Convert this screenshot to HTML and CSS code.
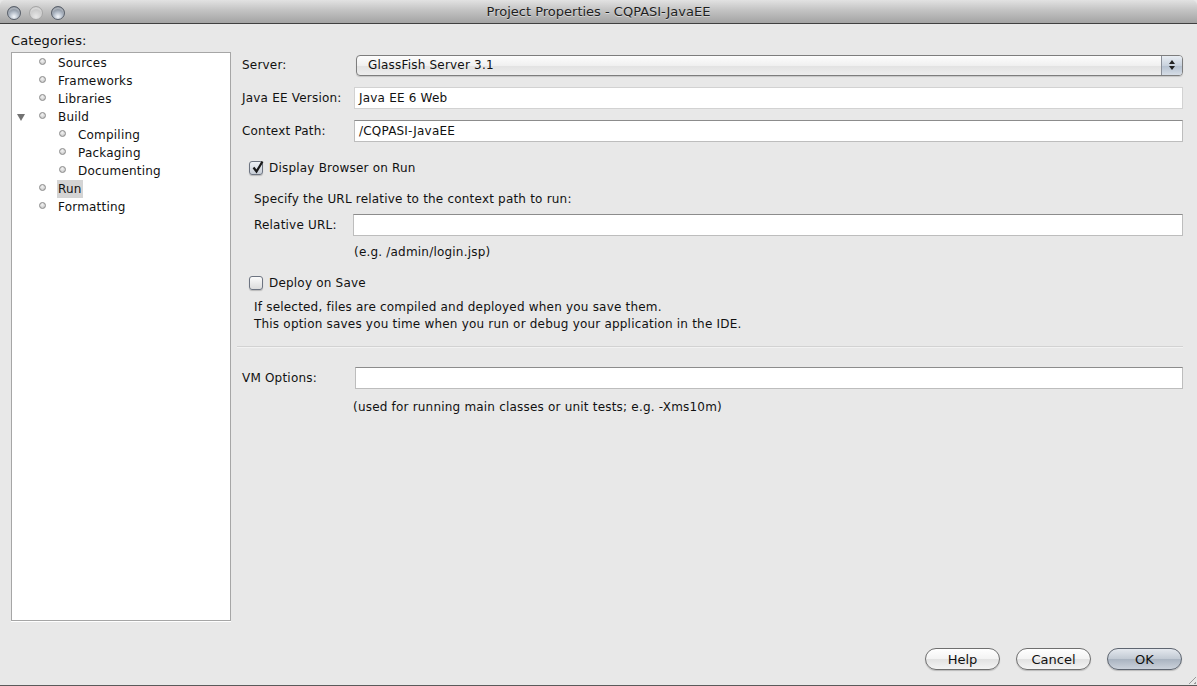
FILE: index.html
```html
<!DOCTYPE html>
<html lang="en">
<head>
  <meta charset="UTF-8">
  <title>Project Properties - CQPASI-JavaEE</title>
  <link rel="stylesheet" href="styles.css">
</head>
<body>

  <div class="window">
    <div class="titlebar">
      <div class="lights">
        <span class="light"></span>
        <span class="light off"></span>
        <span class="light"></span>
      </div>
      <div class="title">Project Properties - CQPASI-JavaEE</div>
    </div>

    <div class="content">
      <!-- Kategoriler -->
      <div class="sidebar">
        <div class="cat-label">Categories:</div>
        <div class="tree">
          <div class="node"><span class="dot"></span><span class="name">Sources</span></div>
          <div class="node"><span class="dot"></span><span class="name">Frameworks</span></div>
          <div class="node"><span class="dot"></span><span class="name">Libraries</span></div>
          <div class="node"><span class="twisty"></span><span class="dot"></span><span class="name">Build</span></div>
          <div class="node child"><span class="dot"></span><span class="name">Compiling</span></div>
          <div class="node child"><span class="dot"></span><span class="name">Packaging</span></div>
          <div class="node child"><span class="dot"></span><span class="name">Documenting</span></div>
          <div class="node"><span class="dot"></span><span class="name selected">Run</span></div>
          <div class="node"><span class="dot"></span><span class="name">Formatting</span></div>
        </div>
      </div>

      <!-- Ayarlar -->
      <div class="main">
        <div class="row first">
          <label class="lbl">Server:</label>
          <div class="combo">
            <span class="combo-text">GlassFish Server 3.1</span>
            <span class="combo-arrows">
              <svg width="8" height="12" viewBox="0 0 8 12"><path d="M4 1 L7 5 L1 5 Z" fill="#222"/><path d="M1 7 L7 7 L4 11 Z" fill="#222"/></svg>
            </span>
          </div>
        </div>
        <div class="row">
          <label class="lbl">Java EE Version:</label>
          <div class="field readonly">Java EE 6 Web</div>
        </div>
        <div class="row">
          <label class="lbl">Context Path:</label>
          <div class="field">/CQPASI-JavaEE</div>
        </div>

        <div class="check-row browser">
          <span class="checkbox checked">
            <svg width="13" height="13" viewBox="0 0 13 13"><path d="M2.5 6.5 L5.5 10.5 L11.5 0.5" stroke="#1a1a1a" stroke-width="2.2" fill="none"/></svg>
          </span>
          <span>Display Browser on Run</span>
        </div>
        <div class="indent note">Specify the URL relative to the context path to run:</div>
        <div class="row indent url">
          <label class="lbl short">Relative URL:</label>
          <div class="field"></div>
        </div>
        <div class="hint">(e.g. /admin/login.jsp)</div>

        <div class="check-row deploy">
          <span class="checkbox"></span>
          <span>Deploy on Save</span>
        </div>
        <div class="indent desc">
          If selected, files are compiled and deployed when you save them.<br>
          This option saves you time when you run or debug your application in the IDE.
        </div>

        <div class="separator"></div>

        <div class="row vm">
          <label class="lbl">VM Options:</label>
          <div class="field vmfield"></div>
        </div>
        <div class="hint vmhint">(used for running main classes or unit tests; e.g. -Xms10m)</div>
      </div>
    </div>

    <div class="footer">
      <button class="btn">Help</button>
      <button class="btn">Cancel</button>
      <button class="btn default">OK</button>
      <span class="grip"></span>
    </div>
  </div>

</body>
</html>
```

FILE: styles.css
```css
html, body {
  margin: 0;
  padding: 0;
  background: #e8e8e8;
  font-family: 'DejaVu Sans', 'Liberation Sans', sans-serif;
  font-size: 12px;
  letter-spacing: 0.2px;
  color: #111;
}

.window {
  width: 1197px;
  height: 686px;
  display: flex;
  flex-direction: column;
  background: #e8e8e8;
  border-bottom: 1px solid #5a5a5a;
  box-sizing: border-box;
  position: relative;
  overflow: hidden;
}

/* Baslik cubugu */
.titlebar {
  height: 23px;
  flex: none;
  display: flex;
  align-items: center;
  justify-content: center;
  position: relative;
  background: linear-gradient(#e2e2e2, #c6c6c6 40%, #a3a3a3);
  border-bottom: 1px solid #404040;
  border-top-right-radius: 5px;
  border-top-left-radius: 5px;
}

.title {
  font-size: 13px;
  letter-spacing: 0;
  color: #1e1e1e;
  text-shadow: 0 1px 0 rgba(255, 255, 255, 0.45);
}

.lights {
  position: absolute;
  left: 7px;
  top: 6px;
  display: flex;
  gap: 8px;
}

.light {
  width: 14px;
  height: 14px;
  border-radius: 50%;
  border: 1px solid #5d636d;
  background: radial-gradient(circle at 50% 80%, #f4f7fb 0%, #b3bcc8 40%, #6d7682 85%),
              #6d7682;
  box-sizing: border-box;
  box-shadow: inset 0 2px 1px rgba(255, 255, 255, 0.35);
}

.light.off {
  border-color: #a6a6a6;
  background: radial-gradient(circle at 50% 80%, #e6e6e6 0%, #cdcdcd 55%, #b4b4b4 100%);
}

/* Icerik */
.content {
  flex: 1;
  display: flex;
  padding: 0 14px 0 11px;
}

.sidebar {
  width: 220px;
  display: flex;
  flex-direction: column;
}

.cat-label {
  font-size: 13px;
  letter-spacing: 0.1px;
  margin-top: 9px;
  line-height: 16px;
  margin-bottom: 3px;
}

.tree {
  flex: 1;
  background: #fff;
  border: 1px solid #a6a6a6;
  box-shadow: 0 1px 0 #fff;
  padding-top: 1px;
}

.node {
  height: 18px;
  display: flex;
  align-items: center;
  padding-left: 27px;
  position: relative;
}

.node.child { padding-left: 47px; }

.dot {
  width: 7px;
  height: 7px;
  border-radius: 50%;
  border: 1px solid #8a8a8a;
  background: radial-gradient(circle at 45% 35%, #f4f4f4, #bdbdbd);
  box-sizing: border-box;
  margin-right: 11px;
  margin-top: -4px;
}

.twisty {
  position: absolute;
  left: 5px;
  top: 6px;
  width: 0;
  height: 0;
  border-left: 4px solid transparent;
  border-right: 4px solid transparent;
  border-top: 7px solid #727272;
}

.name {
  padding: 1px 1px;
  line-height: 16px;
}

.name.selected { background: #d4d4d4; }

/* Form */
.main {
  flex: 1;
  margin-left: 11px;
  display: flex;
  flex-direction: column;
}

.row {
  display: flex;
  align-items: center;
  height: 22px;
  margin-top: 11px;
}

.row.first { margin-top: 30px; }

.lbl {
  width: 112px;
  flex: none;
}

.lbl.short { width: 99px; }

.field {
  flex: 1;
  height: 22px;
  box-sizing: border-box;
  background: #fff;
  border: 1px solid #bdbdbd;
  border-top-color: #8c8c8c;
  padding: 3px 4px;
  line-height: 15px;
  white-space: nowrap;
}

.field.readonly {
  border-color: #d2d2d2;
}

.combo {
  flex: 1;
  height: 21px;
  margin-left: 2px;
  box-sizing: border-box;
  border: 1px solid #7d7d7d;
  border-radius: 4px;
  background: linear-gradient(#fdfdfd, #f0f0f0 50%, #e2e2e2 51%, #ededed);
  display: flex;
  align-items: center;
  box-shadow: 0 1px 1px rgba(0, 0, 0, 0.15);
  overflow: hidden;
}

.combo-text {
  flex: 1;
  padding-left: 11px;
}

.combo-arrows {
  width: 20px;
  height: 100%;
  border-left: 1px solid #8a8f98;
  background: linear-gradient(#e8edf3, #c9d2dd 50%, #b4c0cf 51%, #d6dde6);
  display: flex;
  align-items: center;
  justify-content: center;
}

.check-row {
  display: flex;
  align-items: center;
  height: 20px;
  margin-left: 7px;
}

.check-row.browser { margin-top: 16px; }
.check-row.deploy { margin-top: 13px; }

.checkbox {
  width: 14px;
  height: 14px;
  box-sizing: border-box;
  border: 1px solid #6d7481;
  border-radius: 3px;
  background: linear-gradient(#fbfbfb, #dcdcdc);
  margin-right: 6px;
  display: flex;
  align-items: center;
  justify-content: center;
  box-shadow: 0 1px 1px rgba(0, 0, 0, 0.2);
  overflow: visible;
}

.checkbox.checked {
  background: linear-gradient(#eef1f5, #c7cdd6);
}

.checkbox svg { margin: -2px -2px 0 0; }

.indent { margin-left: 12px; }

.note {
  margin-top: 13px;
  line-height: 16px;
}

.row.url { margin-top: 7px; }

.hint {
  margin-left: 112px;
  margin-top: 8px;
  line-height: 16px;
}

.desc {
  margin-top: 6px;
  line-height: 17px;
}

.separator {
  height: 0;
  border-top: 1px solid #d2d2d2;
  border-bottom: 1px solid #f2f2f2;
  margin: 13px 0 0 -5px;
}

.row.vm { margin-top: 19px; }

.vmfield { margin-left: 1px; }

.vmhint {
  margin-left: 111px;
  margin-top: 10px;
}

/* Butonlar */
.footer {
  flex: none;
  height: 64px;
  display: flex;
  justify-content: flex-end;
  align-items: flex-start;
  padding: 27px 15px 0 0;
  box-sizing: border-box;
  gap: 16px;
  position: relative;
}

.btn {
  width: 75px;
  height: 22px;
  border-radius: 11px;
  border: 1px solid #6f6f6f;
  background: linear-gradient(#ffffff, #f3f3f3 50%, #e2e2e2 51%, #f4f4f4);
  font-family: inherit;
  font-size: 13px;
  color: #111;
  padding: 0;
  box-shadow: 0 1px 1px rgba(0, 0, 0, 0.2);
}

.btn.default {
  border-color: #5e6570;
  background: linear-gradient(#e4e8ee, #c1c9d3 50%, #a9b3c0 51%, #cbd2db);
}

.grip {
  position: absolute;
  right: 1px;
  bottom: 1px;
  width: 11px;
  height: 11px;
  background: repeating-linear-gradient(135deg, transparent 0 2px, #9a9a9a 2px 3px, transparent 3px 4px);
  clip-path: polygon(100% 0, 100% 100%, 0 100%);
}
```
